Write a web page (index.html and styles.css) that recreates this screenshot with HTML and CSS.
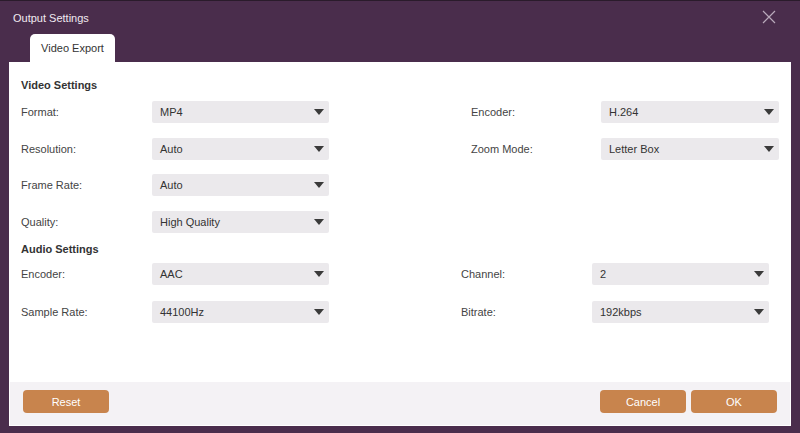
FILE: index.html
```html
<!DOCTYPE html>
<html>
<head>
<meta charset="utf-8">
<link rel="stylesheet" href="styles.css">
</head>
<body>
<div class="window">
  <div class="titlebar">
    <span class="title">Output Settings</span>
    <svg class="close" width="14" height="14" viewBox="0 0 14 14"><path d="M1 1L13 13M13 1L1 13" stroke="#b9a9ba" stroke-width="1.2" fill="none"/></svg>
  </div>
  <div class="tabs"><div class="tab">Video Export</div></div>
  <div class="panel">
    <div class="content">
      <div class="heading">Video Settings</div>
      <div class="grid video">
        <div class="label">Format:</div><div class="select">MP4</div><div></div><div class="label">Encoder:</div><div class="select">H.264</div>
        <div class="label">Resolution:</div><div class="select">Auto</div><div></div><div class="label">Zoom Mode:</div><div class="select">Letter Box</div>
        <div class="label">Frame Rate:</div><div class="select">Auto</div><div></div><div></div><div></div>
        <div class="label">Quality:</div><div class="select">High Quality</div><div></div><div></div><div></div>
      </div>
      <div class="heading audio-h">Audio Settings</div>
      <div class="grid audio">
        <div class="label">Encoder:</div><div class="select">AAC</div><div></div><div class="label">Channel:</div><div class="select">2</div>
        <div class="label">Sample Rate:</div><div class="select">44100Hz</div><div></div><div class="label">Bitrate:</div><div class="select">192kbps</div>
      </div>
    </div>
    <div class="footer">
      <button class="btn">Reset</button>
      <div class="right">
        <button class="btn">Cancel</button>
        <button class="btn">OK</button>
      </div>
    </div>
  </div>
</div>
</body>
</html>
```
FILE: styles.css
```css
* { box-sizing: border-box; }
html, body { margin: 0; padding: 0; }
body {
  width: 800px; height: 433px; overflow: hidden;
  background: #4a2d4c;
  font-family: Tahoma, "Liberation Sans", Arial, sans-serif;
  font-size: 11px;
  line-height: 14px;
  color: #333;
}
.window {
  height: 433px;
  border-top: 1px solid #2a1b2b;
  display: flex; flex-direction: column;
  padding: 0 9px 7px 9px;
}
.titlebar {
  height: 33px;
  display: flex; align-items: center; justify-content: space-between;
  padding: 0 15px 0 4px;
}
.title { color: #f1eaf1; font-size: 11px; }
.close { margin-top: -2px; }
.tabs { height: 28px; display: flex; align-items: flex-end; padding-left: 21px; }
.tab {
  width: 85px; height: 28px;
  background: #fff;
  border-radius: 5px 5px 0 0;
  display: flex; align-items: center; justify-content: center;
  color: #333; font-size: 11px;
}
.panel {
  flex: 1;
  background: #fff;
  display: flex; flex-direction: column;
  padding: 0 1px 1px 1px;
}
.content { flex: 1; padding: 16px 11px 0 11px; }
.heading { font-weight: bold; font-size: 11px; color: #333; height: 14px; line-height: 14px; }
.grid { display: grid; align-items: center; grid-auto-rows: 22px; row-gap: 14.67px; }
.video { grid-template-columns: 131px 177px 142px 130px 178px; margin-top: 9px; }
.audio { grid-template-columns: 131px 177px 132px 131px 177px; margin-top: 7px; row-gap: 16px; }
.audio-h { margin-top: 9px; }
.label { color: #444; font-size: 11px; }
.select {
  height: 22px;
  background: #ebe9ec;
  border-radius: 2px;
  padding-left: 8px;
  display: flex; align-items: center;
  position: relative;
  color: #333; font-size: 11px;
}
.select::after {
  content: "";
  position: absolute; right: 5px; top: 8px;
  border-left: 5px solid transparent;
  border-right: 5px solid transparent;
  border-top: 6px solid #3a3a3a;
  width: 0; height: 0;
}
.footer {
  height: 43px;
  background: #f4f2f5;
  display: flex; align-items: flex-start; justify-content: space-between;
  padding: 8px 13px 0 13px;
}
.right { display: flex; gap: 5px; }
.btn {
  width: 86px; height: 23px;
  background: #c8844d;
  border: none; border-radius: 4px;
  color: #fff; font-family: inherit; font-size: 11px;
  padding: 0;
}
```
